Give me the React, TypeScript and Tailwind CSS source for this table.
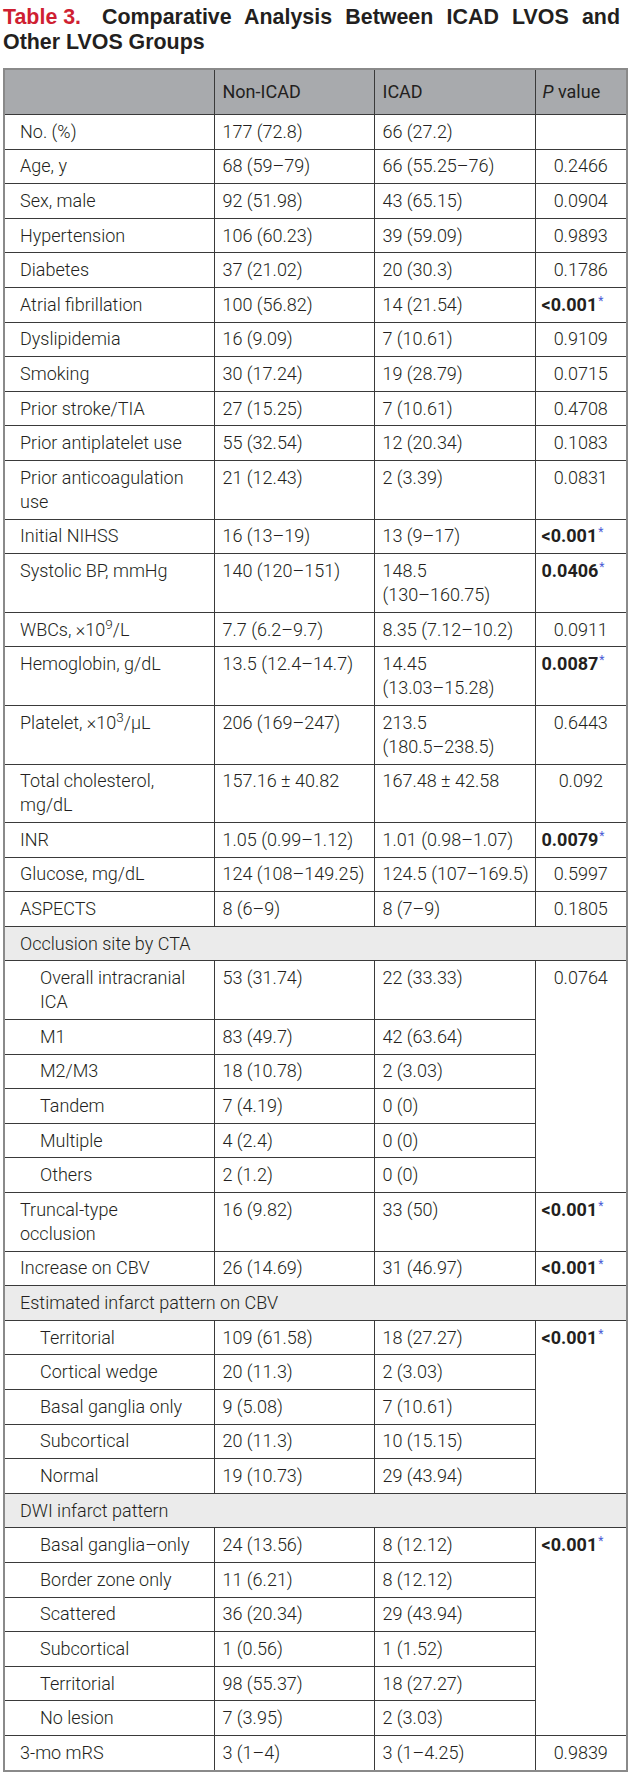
import React from "react";

type P = { t: string; b?: boolean } | null | "skip";

type R =
  | { k: "sec"; label: string }
  | {
      k: "row";
      label: React.ReactNode;
      a: React.ReactNode;
      b: React.ReactNode;
      p: P;
      span?: number;
      ind?: boolean;
    };

const Star = () => <sup className="text-[12px] text-[#4b5bd6] font-normal ml-[1px]">*</sup>;

const rows: R[] = [
  { k: "row", label: "No. (%)", a: "177 (72.8)", b: "66 (27.2)", p: { t: "" } },
  { k: "row", label: "Age, y", a: "68 (59–79)", b: "66 (55.25–76)", p: { t: "0.2466" } },
  { k: "row", label: "Sex, male", a: "92 (51.98)", b: "43 (65.15)", p: { t: "0.0904" } },
  { k: "row", label: "Hypertension", a: "106 (60.23)", b: "39 (59.09)", p: { t: "0.9893" } },
  { k: "row", label: "Diabetes", a: "37 (21.02)", b: "20 (30.3)", p: { t: "0.1786" } },
  { k: "row", label: "Atrial fibrillation", a: "100 (56.82)", b: "14 (21.54)", p: { t: "<0.001", b: true } },
  { k: "row", label: "Dyslipidemia", a: "16 (9.09)", b: "7 (10.61)", p: { t: "0.9109" } },
  { k: "row", label: "Smoking", a: "30 (17.24)", b: "19 (28.79)", p: { t: "0.0715" } },
  { k: "row", label: "Prior stroke/TIA", a: "27 (15.25)", b: "7 (10.61)", p: { t: "0.4708" } },
  { k: "row", label: "Prior antiplatelet use", a: "55 (32.54)", b: "12 (20.34)", p: { t: "0.1083" } },
  {
    k: "row",
    label: (
      <>
        Prior anticoagulation
        <br />
        use
      </>
    ),
    a: "21 (12.43)",
    b: "2 (3.39)",
    p: { t: "0.0831" },
  },
  { k: "row", label: "Initial NIHSS", a: "16 (13–19)", b: "13 (9–17)", p: { t: "<0.001", b: true } },
  {
    k: "row",
    label: "Systolic BP, mmHg",
    a: "140 (120–151)",
    b: (
      <>
        148.5
        <br />
        (130–160.75)
      </>
    ),
    p: { t: "0.0406", b: true },
  },
  {
    k: "row",
    label: (
      <>
        WBCs, ×10<sup>9</sup>/L
      </>
    ),
    a: "7.7 (6.2–9.7)",
    b: "8.35 (7.12–10.2)",
    p: { t: "0.0911" },
  },
  {
    k: "row",
    label: "Hemoglobin, g/dL",
    a: "13.5 (12.4–14.7)",
    b: (
      <>
        14.45
        <br />
        (13.03–15.28)
      </>
    ),
    p: { t: "0.0087", b: true },
  },
  {
    k: "row",
    label: (
      <>
        Platelet, ×10<sup>3</sup>/μL
      </>
    ),
    a: "206 (169–247)",
    b: (
      <>
        213.5
        <br />
        (180.5–238.5)
      </>
    ),
    p: { t: "0.6443" },
  },
  {
    k: "row",
    label: (
      <>
        Total cholesterol,
        <br />
        mg/dL
      </>
    ),
    a: "157.16 ± 40.82",
    b: "167.48 ± 42.58",
    p: { t: "0.092" },
  },
  { k: "row", label: "INR", a: "1.05 (0.99–1.12)", b: "1.01 (0.98–1.07)", p: { t: "0.0079", b: true } },
  { k: "row", label: "Glucose, mg/dL", a: "124 (108–149.25)", b: "124.5 (107–169.5)", p: { t: "0.5997" } },
  { k: "row", label: "ASPECTS", a: "8 (6–9)", b: "8 (7–9)", p: { t: "0.1805" } },
  { k: "sec", label: "Occlusion site by CTA" },
  {
    k: "row",
    ind: true,
    label: (
      <>
        Overall intracranial
        <br />
        ICA
      </>
    ),
    a: "53 (31.74)",
    b: "22 (33.33)",
    p: { t: "0.0764" },
    span: 6,
  },
  { k: "row", ind: true, label: "M1", a: "83 (49.7)", b: "42 (63.64)", p: "skip" },
  { k: "row", ind: true, label: "M2/M3", a: "18 (10.78)", b: "2 (3.03)", p: "skip" },
  { k: "row", ind: true, label: "Tandem", a: "7 (4.19)", b: "0 (0)", p: "skip" },
  { k: "row", ind: true, label: "Multiple", a: "4 (2.4)", b: "0 (0)", p: "skip" },
  { k: "row", ind: true, label: "Others", a: "2 (1.2)", b: "0 (0)", p: "skip" },
  {
    k: "row",
    label: (
      <>
        Truncal-type
        <br />
        occlusion
      </>
    ),
    a: "16 (9.82)",
    b: "33 (50)",
    p: { t: "<0.001", b: true },
  },
  { k: "row", label: "Increase on CBV", a: "26 (14.69)", b: "31 (46.97)", p: { t: "<0.001", b: true } },
  { k: "sec", label: "Estimated infarct pattern on CBV" },
  { k: "row", ind: true, label: "Territorial", a: "109 (61.58)", b: "18 (27.27)", p: { t: "<0.001", b: true }, span: 5 },
  { k: "row", ind: true, label: "Cortical wedge", a: "20 (11.3)", b: "2 (3.03)", p: "skip" },
  { k: "row", ind: true, label: "Basal ganglia only", a: "9 (5.08)", b: "7 (10.61)", p: "skip" },
  { k: "row", ind: true, label: "Subcortical", a: "20 (11.3)", b: "10 (15.15)", p: "skip" },
  { k: "row", ind: true, label: "Normal", a: "19 (10.73)", b: "29 (43.94)", p: "skip" },
  { k: "sec", label: "DWI infarct pattern" },
  { k: "row", ind: true, label: "Basal ganglia–only", a: "24 (13.56)", b: "8 (12.12)", p: { t: "<0.001", b: true }, span: 6 },
  { k: "row", ind: true, label: "Border zone only", a: "11 (6.21)", b: "8 (12.12)", p: "skip" },
  { k: "row", ind: true, label: "Scattered", a: "36 (20.34)", b: "29 (43.94)", p: "skip" },
  { k: "row", ind: true, label: "Subcortical", a: "1 (0.56)", b: "1 (1.52)", p: "skip" },
  { k: "row", ind: true, label: "Territorial", a: "98 (55.37)", b: "18 (27.27)", p: "skip" },
  { k: "row", ind: true, label: "No lesion", a: "7 (3.95)", b: "2 (3.03)", p: "skip" },
  { k: "row", label: "3-mo mRS", a: "3 (1–4)", b: "3 (1–4.25)", p: { t: "0.9839" } },
];

const cell = "border border-[#3a3a3a] align-top py-[4.8px] leading-[24px] whitespace-nowrap";

export default function App() {
  return (
    <div className="w-[628px] bg-white text-[#231f20] font-['Roboto','Liberation_Sans',sans-serif]">
      <h1 className="pt-[5px] pl-[3px] font-['Liberation_Sans',Arial,sans-serif] font-bold text-[21.4px] leading-[25px] text-[#231f20]">
        <div className="flex w-[617px]">
          <span className="text-[#cf1f32]">Table 3.</span>
          <span className="ml-[21px] flex-1 text-justify [text-align-last:justify]">
            Comparative Analysis Between ICAD LVOS and
          </span>
        </div>
        <div>Other LVOS Groups</div>
      </h1>
      <table className="mt-[13px] ml-[3px] w-[623px] table-fixed border-collapse border-2 border-[#8a8a8a] text-[18px] font-light">
        <colgroup>
          <col className="w-[210px]" />
          <col className="w-[160px]" />
          <col className="w-[161px]" />
          <col className="w-[92px]" />
        </colgroup>
        <thead>
          <tr className="bg-[#a8aaad]">
            <th className="border border-[#3a3a3a] py-[10px] leading-[24px] font-normal"></th>
            <th className="border border-[#3a3a3a] py-[10px] pl-[8px] leading-[24px] text-left font-normal">Non-ICAD</th>
            <th className="border border-[#3a3a3a] py-[10px] pl-[8px] leading-[24px] text-left font-normal">ICAD</th>
            <th className="border border-[#3a3a3a] py-[10px] pl-[7px] leading-[24px] text-left font-normal">
              <i>P</i> value
            </th>
          </tr>
        </thead>
        <tbody>
          {rows.map((r, i) => {
            if (r.k === "sec") {
              return (
                <tr key={i} className="bg-[#ebebeb]">
                  <td colSpan={4} className={`${cell} pl-[15px]`}>
                    {r.label}
                  </td>
                </tr>
              );
            }
            return (
              <tr key={i}>
                <td className={`${cell} ${r.ind ? "pl-[35px]" : "pl-[15px]"}`}>{r.label}</td>
                <td className={`${cell} pl-[8px]`}>{r.a}</td>
                <td className={`${cell} pl-[8px]`}>{r.b}</td>
                {r.p === "skip" ? null : r.p === null ? (
                  <td className={cell}></td>
                ) : r.p.b ? (
                  <td rowSpan={r.span} className={`${cell} pl-[6px] font-bold`}>
                    {r.p.t}
                    <Star />
                  </td>
                ) : (
                  <td rowSpan={r.span} className={`${cell} text-center`}>
                    {r.p.t}
                  </td>
                )}
              </tr>
            );
          })}
        </tbody>
      </table>
    </div>
  );
}
